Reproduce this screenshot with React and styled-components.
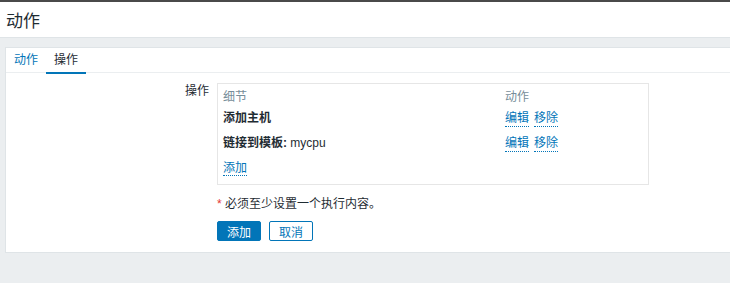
import React from 'react'
import styled, { createGlobalStyle } from 'styled-components'

const GlobalStyle = createGlobalStyle`
    body {
        margin: 0;
        background: #ebeef0;
        font-family: "Liberation Sans", "Noto Sans CJK SC", sans-serif;
        font-size: 12px;
        color: #1f2c33;
    }
`

const operations = [
    { title: '添加主机' },
    { title: '链接到模板:', value: 'mycpu' },
]

function App() {
    return (
        <>
            <GlobalStyle />
            <TopBar />
            <Header>
                <Title>动作</Title>
            </Header>
            <Main>
                <Card>
                    <Tabs>
                        <Tab>动作</Tab>
                        <Tab active>操作</Tab>
                    </Tabs>
                    <FormRow>
                        <Label>操作</Label>
                        <Field>
                            <OpTable>
                                <HeadCell>细节</HeadCell>
                                <HeadCell>动作</HeadCell>
                                {operations.map((op, index) => (
                                    <React.Fragment key={index}>
                                        <Cell>
                                            <b>{op.title}</b>
                                            {op.value && <> {op.value}</>}
                                        </Cell>
                                        <Cell>
                                            <Actions>
                                                <LinkAction>编辑</LinkAction>
                                                <LinkAction>移除</LinkAction>
                                            </Actions>
                                        </Cell>
                                    </React.Fragment>
                                ))}
                                <Cell last>
                                    <LinkAction>添加</LinkAction>
                                </Cell>
                            </OpTable>
                            <Note><Star>*</Star> 必须至少设置一个执行内容。</Note>
                            <Buttons>
                                <Button primary>添加</Button>
                                <Button>取消</Button>
                            </Buttons>
                        </Field>
                    </FormRow>
                </Card>
            </Main>
        </>
    )
}
export default App

const TopBar = styled.div`
    height: 2px;
    background: #4a4a4a;
`
const Header = styled.div`
    height: 35px;
    background: #fff;
    border-bottom: 1px solid #dfe4e7;
    display: flex;
    align-items: center;
    padding-left: 6px;
`
const Title = styled.h1`
    margin: 0;
    font-size: 17px;
    font-weight: normal;
`
const Main = styled.div`
    padding: 9px 0 0 5px;
`
const Card = styled.div`
    background: #fff;
    border: 1px solid #dfe4e7;
    border-right: none;
    padding-bottom: 11px;
`
const Tabs = styled.div`
    display: flex;
    height: 24px;
    border-bottom: 1px solid #ebeef0;
`
const Tab = styled.div`
    padding: 0 8px;
    line-height: 24px;
    color: ${props => props.active ? '#1f2c33' : '#0275b8'};
    border-bottom: 2px solid ${props => props.active ? '#0275b8' : 'transparent'};
    height: 24px;
    box-sizing: content-box;
`
const FormRow = styled.div`
    display: flex;
    gap: 8px;
    padding-top: 10px;
`
const Label = styled.div`
    width: 203px;
    text-align: right;
    line-height: 16px;
`
const Field = styled.div`
    display: flex;
    flex-direction: column;
`
const OpTable = styled.div`
    box-sizing: border-box;
    width: 432px;
    border: 1px solid #e6e6e6;
    display: grid;
    grid-template-columns: 282px 1fr;
    padding: 5px 0 8px 5px;
    line-height: 16px;
`
const HeadCell = styled.div`
    color: #768d99;
    padding-bottom: 5px;
`
const Cell = styled.div`
    height: ${props => props.last ? '16px' : '25px'};
    white-space: nowrap;
`
const Actions = styled.div`
    display: flex;
    gap: 5px;
`
const LinkAction = styled.span`
    color: #0275b8;
    border-bottom: 1px dotted #0275b8;
    cursor: pointer;
`
const Note = styled.div`
    margin-top: 11px;
    line-height: 16px;
`
const Star = styled.span`
    color: #e33734;
`
const Buttons = styled.div`
    display: flex;
    gap: 8px;
    margin-top: 9px;
`
const Button = styled.button`
    height: 20px;
    padding: 0 9px;
    font-family: inherit;
    font-size: 12px;
    border: 1px solid #0275b8;
    border-radius: 2px;
    background: ${props => props.primary ? '#0275b8' : '#fff'};
    color: ${props => props.primary ? '#fff' : '#0275b8'};
`
